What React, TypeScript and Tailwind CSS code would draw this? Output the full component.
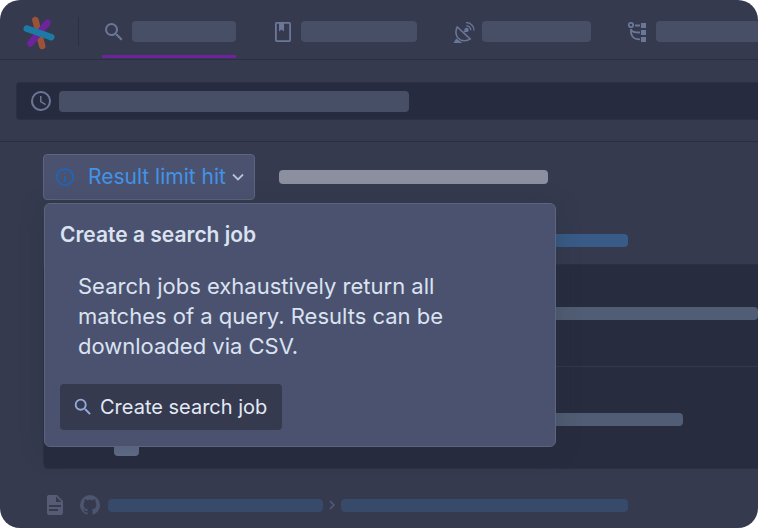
import type { ReactNode } from "react";

const icons = {
  magnify:
    "M9.5,3A6.5,6.5 0 0,1 16,9.5C16,11.11 15.41,12.59 14.44,13.73L14.71,14H15.5L20.5,19L19,20.5L14,15.5V14.71L13.73,14.44C12.59,15.41 11.11,16 9.5,16A6.5,6.5 0 0,1 3,9.5A6.5,6.5 0 0,1 9.5,3M9.5,5C7,5 5,7 5,9.5C5,12 7,14 9.5,14C12,14 14,12 14,9.5C14,7 12,5 9.5,5Z",
  clock:
    "M12,20A8,8 0 0,0 20,12A8,8 0 0,0 12,4A8,8 0 0,0 4,12A8,8 0 0,0 12,20M12,2A10,10 0 0,1 22,12A10,10 0 0,1 12,22C6.47,22 2,17.5 2,12A10,10 0 0,1 12,2M12.5,7V12.25L17,14.92L16.25,16.15L11,13V7H12.5Z",
  file: "M13,9H18.5L13,3.5V9M6,2H14L20,8V20A2,2 0 0,1 18,22H6C4.89,22 4,21.1 4,20V4C4,2.89 4.89,2 6,2M15,18V16H6V18H15M18,14V12H6V14H18Z",
  github:
    "M12,2A10,10 0 0,0 2,12C2,16.42 4.87,20.17 8.84,21.5C9.34,21.58 9.5,21.27 9.5,21C9.5,20.77 9.5,20.14 9.5,19.31C6.73,19.91 6.14,17.97 6.14,17.97C5.68,16.81 5.03,16.5 5.03,16.5C4.12,15.88 5.1,15.9 5.1,15.9C6.1,15.97 6.63,16.93 6.63,16.93C7.5,18.45 8.97,18 9.54,17.76C9.63,17.11 9.89,16.67 10.17,16.42C7.95,16.17 5.62,15.31 5.62,11.5C5.62,10.39 6,9.5 6.65,8.79C6.55,8.54 6.2,7.5 6.75,6.15C6.75,6.15 7.59,5.88 9.5,7.17C10.29,6.95 11.15,6.84 12,6.84C12.85,6.84 13.71,6.95 14.5,7.17C16.41,5.88 17.25,6.15 17.25,6.15C17.8,7.5 17.45,8.54 17.35,8.79C18,9.5 18.38,10.39 18.38,11.5C18.38,15.32 16.04,16.16 13.81,16.41C14.17,16.72 14.5,17.33 14.5,18.26C14.5,19.6 14.5,20.68 14.5,21C14.5,21.27 14.66,21.59 15.17,21.5C19.14,20.16 22,16.42 22,12A10,10 0 0,0 12,2Z",
};

function Icon({ d, className = "size-6" }: { d: string; className?: string }) {
  return (
    <svg viewBox="0 0 24 24" fill="currentColor" aria-hidden="true" className={`shrink-0 ${className}`}>
      <path d={d} />
    </svg>
  );
}

function Logo() {
  return (
    <svg viewBox="0 0 32 34" aria-hidden="true" className="h-[34px] w-8 shrink-0" strokeWidth="6.6" strokeLinecap="round">
      <path d="M12.4 4L19.2 30" stroke="#9a5238" />
      <path d="M24.4 6.800L7.400 27.400" stroke="#6d239b" />
      <path d="M3.8 12.6L28.2 21.2" stroke="#1d79a5" />
    </svg>
  );
}

function NotebookIcon() {
  return (
    <svg viewBox="0 0 24 24" aria-hidden="true" className="size-6 shrink-0">
      <rect x="4.9" y="2.9" width="14.2" height="18.2" rx="0.8" fill="none" stroke="currentColor" strokeWidth="1.8" />
      <path d="M8 3h5v8.6l-2.5-2.2L8 11.600z" fill="currentColor" />
    </svg>
  );
}

function SatelliteIcon() {
  return (
    <svg viewBox="0 0 24 24" aria-hidden="true" className="size-6 shrink-0" fill="none" stroke="currentColor">
      <path d="M5.300 7L18.200 18.900C15 21.500 9.500 21.600 6.300 18.300C3.400 15.300 3.200 10.300 5.300 7Z" strokeWidth="1.600" />
      <path d="M1.500 23L4.200 18.500L10.500 23Z" fill="currentColor" stroke="none" />
      <circle cx="14.500" cy="10" r="2.200" fill="currentColor" stroke="none" />
      <path d="M11.500 12.500L14.500 10" strokeWidth="1.200" />
      <path d="M14.300 5.800A4.300 4.300 0 0 1 18.800 10.200M14 2.700A7.500 7.500 0 0 1 22 10.400" strokeWidth="1.300" />
    </svg>
  );
}

function TreeIcon() {
  return (
    <svg viewBox="0 0 24 24" aria-hidden="true" className="size-6 shrink-0" fill="none" stroke="currentColor" strokeWidth="1.800">
      <circle cx="5" cy="5" r="2.200" />
      <path d="M9 5.500H14M5 9C5.200 12 8 12.500 14 12.500M5 9C4.500 16 7 19.300 14 19.300" />
      <path d="M15 3h5v5h-5zM15 10h5v5h-5zM15 17h5v5h-5z" fill="currentColor" stroke="none" />
    </svg>
  );
}

function Bar({ className }: { className: string }) {
  return <span aria-hidden="true" className={`block shrink-0 ${className}`} />;
}

function Tab({ icon, label, width, active = false }: { icon: ReactNode; label: string; width: string; active?: boolean }) {
  return (
    <a
      href="#"
      aria-label={label}
      className={`flex shrink-0 items-center gap-1.5 border-b-[3px] pt-2 ${active ? "border-[#6d239b]" : "border-transparent"}`}
    >
      {icon}
      <Bar className={`h-[21px] rounded bg-[#474f66] ${width}`} />
    </a>
  );
}

export default function App() {
  return (
    <div className="min-h-screen overflow-hidden rounded-[20px] bg-[#353a4f] font-['Inter',sans-serif] text-[#dbe2f0]">
      <header className="flex h-[60px] border-b border-[#2b2f42] pb-px pl-[23px] text-[#6b7797]">
        <div className="flex items-center pt-2">
          <Logo />
        </div>
        <div className="mt-[17px] ml-[23px] h-[29px] w-px shrink-0 bg-[#2b2f42]" />
        <nav className="ml-[23px] flex gap-[35px]">
          <Tab active label="Search" icon={<Icon d={icons.magnify} />} width="w-[104px]" />
          <Tab label="Notebooks" icon={<NotebookIcon />} width="w-[116px]" />
          <Tab label="Monitoring" icon={<SatelliteIcon />} width="w-[109px]" />
          <Tab label="Insights" icon={<TreeIcon />} width="w-[120px]" />
        </nav>
      </header>

      <section className="border-b border-[#2b2f42] pt-[22px] pb-[21px] pl-4">
        <div className="flex h-[38px] items-center gap-1.5 rounded-l border border-r-0 border-[#2c3044] bg-[#272b3f] pl-3 text-[#6b7797]">
          <Icon d={icons.clock} />
          <Bar className="h-[21px] w-[350px] rounded bg-[#474f66]" />
        </div>
      </section>

      <main className="pt-3 pl-[43px]">
        <div className="flex items-center gap-6">
          <div className="relative">
            <button
              type="button"
              aria-expanded="true"
              className="flex h-[46px] w-[212px] items-center rounded border border-[#5d647d] bg-[#4a5270] pl-[10px] text-[21px] whitespace-nowrap text-[#4393e7]"
            >
              <svg viewBox="0 0 24 24" aria-hidden="true" className="mr-3 size-[22px] shrink-0" fill="none" stroke="#1668c9" strokeWidth="1.600">
                <circle cx="12" cy="12" r="8.800" />
                <path d="M12 7V9M12 11V16.500" />
              </svg>
              Result limit hit
              <svg viewBox="0 0 12 12" aria-hidden="true" className="ml-1.5 size-3 shrink-0" fill="none" stroke="#b4c0dc" strokeWidth="1.800">
                <path d="M1 3.500L6 8.500L11 3.500" />
              </svg>
            </button>
            <div
              role="dialog"
              aria-labelledby="job-title"
              className="absolute top-[49px] left-px z-10 w-[512px] rounded-md border border-[#5d647d] bg-[#4a5270] px-[15px] py-4 shadow-[0_4px_24px_rgba(38,50,56,0.3)]"
            >
              <h2 id="job-title" className="text-[21px] leading-[30px] font-semibold">
                Create a search job
              </h2>
              <p className="mt-[21px] ml-[18px] w-[400px] text-[22px] leading-[30px]">
                Search jobs exhaustively return all matches of a query. Results can be downloaded via CSV.
              </p>
              <button
                type="button"
                className="mt-[23px] flex h-[46px] w-[222px] items-center gap-1.5 rounded bg-[#353a4f] px-3 text-xl whitespace-nowrap text-[#e3e9f5]"
              >
                <Icon d={icons.magnify} className="size-[22px] text-[#93aadb]" />
                Create search job
              </button>
            </div>
          </div>
          <Bar className="h-3.5 w-[269px] rounded bg-[#8b8fa0]" />
        </div>

        <div className="mt-[34px] flex items-center pl-[70px]">
          <Bar className="h-[13px] w-[515px] rounded bg-[#395b87]" />
        </div>

        <div className="mt-[17px] rounded-l-md border border-r-0 border-[#2c3044] bg-[#282c3f]">
          <div className="h-[102px] border-b border-[#33384c] pt-[42px] pl-[70px]">
            <Bar className="h-[13px] w-[644px] rounded bg-[#515d74]" />
          </div>
          <div className="pt-[46px] pb-3 pl-[70px]">
            <Bar className="h-[13px] w-[569px] rounded bg-[#515d74]" />
            <Bar className="mt-4 h-3.5 w-[25px] rounded bg-[#65718e]" />
          </div>
        </div>

        <div className="mt-6 flex items-center text-[#565c73]">
          <Icon d={icons.file} />
          <Icon d={icons.github} className="ml-[11px] size-6 text-[#4d566f]" />
          <Bar className="ml-1.5 h-[13px] w-[215px] rounded bg-[#374a69]" />
          <svg viewBox="0 0 12 12" aria-hidden="true" className="mx-[3px] size-3 shrink-0" fill="none" stroke="currentColor" strokeWidth="1.500">
            <path d="M4 2L8 6L4 10" />
          </svg>
          <Bar className="h-[13px] w-[287px] rounded bg-[#374a69]" />
        </div>
      </main>
    </div>
  );
}
